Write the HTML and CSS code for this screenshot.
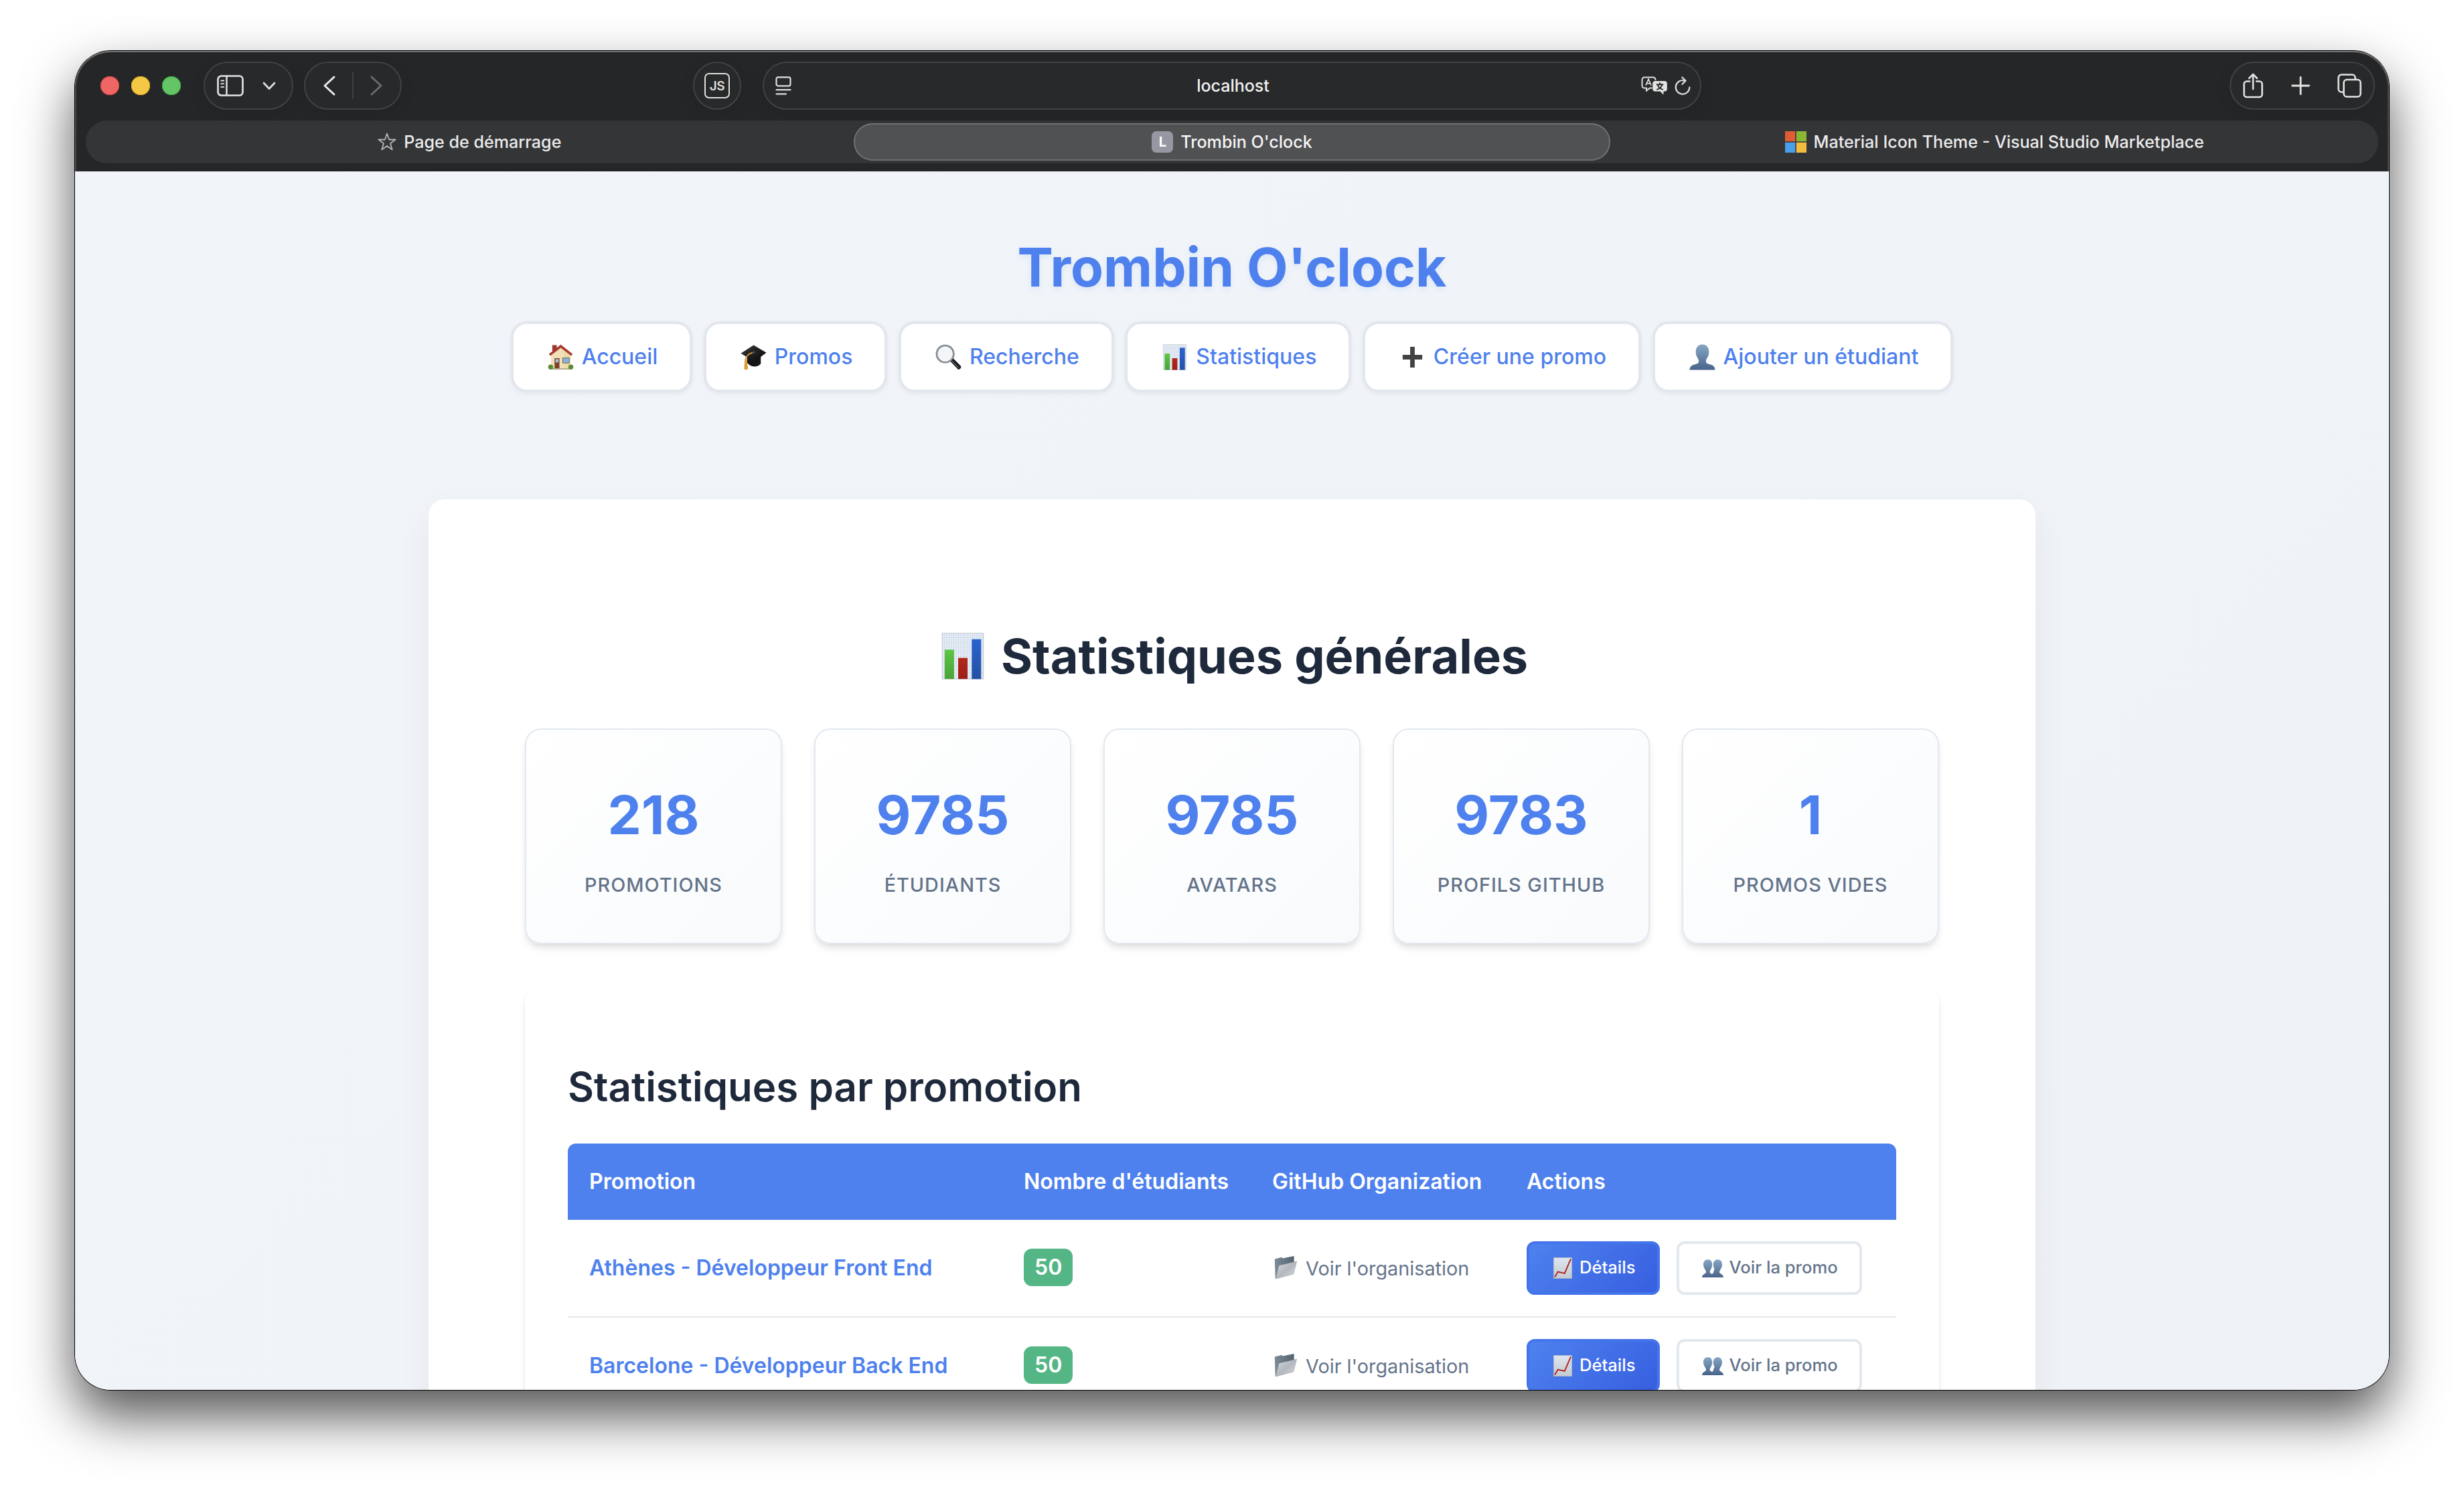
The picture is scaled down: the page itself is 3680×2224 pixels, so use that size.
FILE: index.html
```html
<!DOCTYPE html>
<html lang="fr">
<head>
<meta charset="utf-8">
<title>Trombin O'clock</title>
<link rel="stylesheet" href="styles.css">
</head>
<body>
<svg class="defs" width="0" height="0" aria-hidden="true">
  <defs>
    <linearGradient id="g-sil" x1="0" y1="0" x2="0" y2="1"><stop offset="0" stop-color="#87a7c4"/><stop offset="1" stop-color="#48648a"/></linearGradient>
    <linearGradient id="g-paper" x1="0" y1="0" x2="0" y2="1"><stop offset="0" stop-color="#dfe6ef"/><stop offset="1" stop-color="#c4cad2"/></linearGradient>
    <linearGradient id="g-fold" x1="0" y1="0" x2="1" y2="1"><stop offset="0" stop-color="#d9dce1"/><stop offset=".5" stop-color="#b3b7be"/><stop offset="1" stop-color="#dcdee2"/></linearGradient>
    <linearGradient id="g-back" x1="0" y1="0" x2="1" y2="0"><stop offset="0" stop-color="#7d8c97"/><stop offset="1" stop-color="#53636f"/></linearGradient>
    <linearGradient id="g-green" x1="0" y1="0" x2="0" y2="1"><stop offset="0" stop-color="#5cc643"/><stop offset="1" stop-color="#4aa338"/></linearGradient>
    <linearGradient id="g-red" x1="0" y1="0" x2="0" y2="1"><stop offset="0" stop-color="#b3271d"/><stop offset="1" stop-color="#9b1f17"/></linearGradient>
    <linearGradient id="g-blue" x1="0" y1="0" x2="0" y2="1"><stop offset="0" stop-color="#2a62cf"/><stop offset="1" stop-color="#2450a4"/></linearGradient>
    <linearGradient id="g-cap" x1="0" y1="0" x2="1" y2="1"><stop offset="0" stop-color="#3a3a3a"/><stop offset="1" stop-color="#050505"/></linearGradient>
    <pattern id="p-grid" width="2" height="2" patternUnits="userSpaceOnUse"><rect width="2" height="2" fill="#e9eff6"/><path d="M0 0H2M0 0V2" stroke="#b9cbe0" stroke-width=".5"/></pattern>
  </defs>
  <symbol id="e-house" viewBox="0 0 40 40">
    <path d="M7 1.5h7v9H7z" fill="#9c3a33"/>
    <path d="M5 15L20 3l15 12v23H5z" fill="#f2dfb4"/>
    <path d="M20 3l15 12v23H26V9z" fill="#e8d3a4" opacity=".6"/>
    <path d="M20 1.2L2.4 15.2l1.6 2.2L20 5.2l16 12.2 1.6-2.2z" fill="#b5392f" stroke="#7d2a25" stroke-width=".8"/>
    <path d="M9 20h10v18H9z" fill="#eadfc8"/><path d="M10.500 21.500h7.500v16.500h-7.500z" fill="#7e4426"/><path d="M12 23h4.500v5H12z" fill="#9fc4e6"/>
    <path d="M22.500 20.500h11v9h-11z" fill="#8a6a44"/><path d="M23.500 21.500h9v7h-9z" fill="#7fb2e6"/>
    <path d="M5 37h30v2H5z" fill="#b5a88c"/>
    <circle cx="4.500" cy="35" r="3.800" fill="#5b8c35"/><circle cx="35.500" cy="35" r="3.800" fill="#5b8c35"/>
  </symbol>
  <symbol id="e-cap" viewBox="0 0 40 40">
    <path d="M10 18v10c4 7 15 9 21 2V18z" fill="#161616"/>
    <path d="M20 1.500L39.500 13 21 27 .5 14z" fill="url(#g-cap)"/>
    <path d="M20 12.500C12 15 8 18 7.500 25" fill="none" stroke="#d99a3a" stroke-width="1.800"/>
    <path d="M6.500 23h3l2 15-3.500 1.500L5.500 38z" fill="#dc9a35"/>
    <ellipse cx="20.500" cy="12.500" rx="2.600" ry="1.700" fill="#444"/>
  </symbol>
  <symbol id="e-search" viewBox="0 0 40 40">
    <path d="M24 24l3-2.500 12 12c1.200 2.500-1.500 6-4.500 5L23.500 27z" fill="#17191c"/>
    <path d="M25 25.500l11 11" stroke="#777" stroke-width="1.200"/>
    <circle cx="15" cy="15" r="13" fill="#f4f5f6" stroke="#5d646c" stroke-width="2.600"/>
    <circle cx="15" cy="15" r="13.200" fill="none" stroke="#b8c0c8" stroke-width="1"/>
  </symbol>
  <symbol id="e-bars" viewBox="0 0 40 40">
    <path d="M2.500 .5h35v39h-35z" fill="url(#p-grid)" stroke="#c9ced6" stroke-width=".8"/>
    <path d="M4.500 14.500h8v25h-8z" fill="url(#g-green)"/><path d="M16 21.500h8v18h-8z" fill="url(#g-red)"/><path d="M27.600 5.500h8v34h-8z" fill="url(#g-blue)"/>
  </symbol>
  <symbol id="e-plus" viewBox="0 0 40 40"><path d="M16.500 4h7v12.500H35v7H23.500V36h-7V23.500H5v-7h11.500z" fill="#434343"/></symbol>
  <symbol id="e-person" viewBox="0 0 40 40"><path d="M20 .5c6.500 0 10 4.500 10 11 0 3.500-.5 6-2 8.500-1.300 2.400-2.500 3.500-2.500 6 0 3 1.500 4 5 4.700 5.500 1 8.500 3 9 8.800H.5c.5-5.800 3.500-7.800 9-8.800 3.500-.7 5-1.700 5-4.700 0-2.500-1.200-3.600-2.500-6-1.500-2.500-2-5-2-8.500C10 5 13.500.5 20 .5z" fill="url(#g-sil)"/></symbol>
  <symbol id="e-people" viewBox="0 0 40 40">
    <path d="M29 4c5.500 0 8.500 3.500 8.500 9.500 0 7-5 10-5 14s7 2.500 7.500 10H18z" fill="url(#g-sil)"/><path d="M29 4c-4.500 0-8 3.500-8 9.500 0 7 4.500 10 4.500 14l-7.500 4 0 6h14z" fill="url(#g-sil)"/>
    <path d="M11 4c5.500 0 8 3.500 8 9.500 0 7-4.500 10-4.500 14s8 2.500 10 10H0c.5-7.500 7.500-6 7.500-10s-5-7-5-14C2.500 7.500 5.500 4 11 4z" fill="url(#g-sil)"/>
  </symbol>
  <symbol id="e-trend" viewBox="0 0 40 40"><path d="M3 .5h34v39H3z" fill="url(#g-paper)" stroke="#a9b1bb" stroke-width="1"/><path d="M5 37L11 27l12.500 3L35 3" fill="none" stroke="#b1231c" stroke-width="2.400"/></symbol>
  <symbol id="e-folder" viewBox="0 0 40 40">
    <path d="M2 6l12-3 1 2 19-4v14L3 38z" fill="url(#g-back)"/>
    <path d="M9 17L38.500 10 33 31 3.500 39z" fill="url(#g-fold)" stroke="#8d949b" stroke-width=".6"/>
  </symbol>
</svg>

<div class="window">
  <header class="chrome">
    <div class="toolbar">
      <div class="lights"><i class="light red"></i><i class="light yellow"></i><i class="light green"></i></div>
      <div class="pill pill-side">
        <svg width="40" height="32" viewBox="0 0 40 32" fill="none" stroke="#e6e6e6"><rect x="1.500" y="1.500" width="37" height="29" rx="5" stroke-width="2.600"/><path d="M14.500 1.500v29" stroke-width="2.400"/><path d="M5.500 8.500h5.500M5.500 13.200h5.500M5.500 17.900h5.500" stroke-width="1.800"/></svg>
        <svg width="20" height="13" viewBox="0 0 20 13" fill="none" stroke="#dcdcdc" stroke-width="2.800" stroke-linecap="round" stroke-linejoin="round"><path d="M2 2l8 8.500L18 2"/></svg>
      </div>
      <div class="pill pill-nav">
        <svg width="18" height="30" viewBox="0 0 18 30" fill="none" stroke="#ececec" stroke-width="3" stroke-linecap="round" stroke-linejoin="round"><path d="M16 2L2 15l14 13"/></svg>
        <i class="sep"></i>
        <svg width="18" height="30" viewBox="0 0 18 30" fill="none" stroke="#6a6b6c" stroke-width="3" stroke-linecap="round" stroke-linejoin="round"><path d="M2 2l14 13L2 28"/></svg>
      </div>
      <div class="pill pill-js"><span class="js">JS</span></div>
      <div class="pill pill-url">
        <svg width="24" height="28" viewBox="0 0 24 28" fill="none" stroke="#dedede" stroke-width="2.200" stroke-linecap="round"><rect x="1.500" y="1.300" width="21" height="13" rx="2.500"/><path d="M1.500 20.200h21M1.500 26.300h14.500"/></svg>
        <span class="host">localhost</span>
        <span class="url-tools">
          <svg width="39" height="28" viewBox="0 0 39 28"><path d="M5 1.500h13a3.500 3.500 0 0 1 3.500 3.500v9a3.500 3.500 0 0 1-3.500 3.500H13l-5 4v-4H5A3.500 3.500 0 0 1 1.500 14V5A3.500 3.500 0 0 1 5 1.500z" fill="none" stroke="#dedede" stroke-width="2"/><rect x="16.500" y="6" width="23" height="18" rx="4" fill="#28292a"/><path d="M21 7h14a3.800 3.800 0 0 1 3.800 3.800v8a3.800 3.800 0 0 1-3.800 3.800h-1.500v5l-5-5H21a3.800 3.800 0 0 1-3.800-3.800v-8A3.800 3.800 0 0 1 21 7z" fill="#e2e2e2"/><path d="M7 13.500L11 4.200l4 9.300M8.400 10.600h5.200" fill="none" stroke="#dedede" stroke-width="1.800"/><path d="M28 9.200v2.600M22.800 12.300h10.400M24.800 12.800c1 3.500 4 6 8 7M31.200 12.800c-1 3.500-4 6-8 7" fill="none" stroke="#28292a" stroke-width="1.900"/></svg>
          <svg width="24" height="28" viewBox="0 0 24 28" fill="none" stroke="#dedede" stroke-width="2.200" stroke-linecap="round" stroke-linejoin="round"><path d="M15 6.500A10.300 10.300 0 1 0 22.300 16.400"/><path d="M11.300 1.500L16.500 6.600l-5.200 5.200"/></svg>
        </span>
      </div>
      <div class="pill pill-right">
        <svg width="30" height="38" viewBox="0 0 30 38" fill="none" stroke="#e2e2e2" stroke-width="2.600" stroke-linecap="round" stroke-linejoin="round"><path d="M10 12.500H5.500a4 4 0 0 0-4 4V32a4 4 0 0 0 4 4h19a4 4 0 0 0 4-4V16.500a4 4 0 0 0-4-4H20M15 24V2M9 8l6-6 6 6"/></svg>
        <svg width="28" height="28" viewBox="0 0 28 28" fill="none" stroke="#e6e6e6" stroke-width="2.800" stroke-linecap="round"><path d="M14 1.500v25M1.500 14h25"/></svg>
        <svg width="36" height="36" viewBox="0 0 36 36" fill="none" stroke="#e2e2e2" stroke-width="2.600" stroke-linejoin="round"><path d="M9 27.500H6A4.500 4.500 0 0 1 1.500 23V6A4.500 4.500 0 0 1 6 1.500h16A4.500 4.500 0 0 1 26.500 6v2.500"/><rect x="9.500" y="9" width="25" height="25.500" rx="4.500"/></svg>
      </div>
    </div>
    <nav class="tabs">
      <div class="tab"><svg width="28" height="28" viewBox="0 0 28 28" fill="none" stroke="#b5b5b6" stroke-width="1.800" stroke-linejoin="round"><path d="M14 1.500l3.100 9h9.500l-7.600 5.700 2.800 9.300L14 19.900l-7.800 5.600L9 16.200 1.400 10.500h9.500z"/></svg><span>Page de démarrage</span></div>
      <div class="tab active"><b class="fav">L</b><span>Trombin O'clock</span></div>
      <div class="tab"><svg width="32" height="32" viewBox="0 0 32 32"><path d="M0 0h15.200v15.200H0z" fill="#e05c35"/><path d="M16.800 0H32v15.200H16.800z" fill="#8ab535"/><path d="M0 16.800h15.200V32H0z" fill="#4a9fea"/><path d="M16.800 16.800H32V32H16.800z" fill="#f4bb41"/></svg><span>Material Icon Theme - Visual Studio Marketplace</span></div>
    </nav>
  </header>

  <main class="page">
    <h1 class="brand">Trombin O'clock</h1>
    <nav class="menu">
      <a class="menu-item"><svg class="emo"><use href="#e-house"/></svg><span>Accueil</span></a>
      <a class="menu-item"><svg class="emo"><use href="#e-cap"/></svg><span>Promos</span></a>
      <a class="menu-item"><svg class="emo"><use href="#e-search"/></svg><span>Recherche</span></a>
      <a class="menu-item"><svg class="emo"><use href="#e-bars"/></svg><span>Statistiques</span></a>
      <a class="menu-item"><svg class="emo"><use href="#e-plus"/></svg><span>Créer une promo</span></a>
      <a class="menu-item"><svg class="emo"><use href="#e-person"/></svg><span>Ajouter un étudiant</span></a>
    </nav>

    <section class="panel">
      <h2 class="panel-title"><svg class="emo-lg"><use href="#e-bars"/></svg><span>Statistiques générales</span></h2>
      <div class="stats">
        <div class="stat"><div class="num">218</div><div class="label">Promotions</div></div>
        <div class="stat"><div class="num">9785</div><div class="label">Étudiants</div></div>
        <div class="stat"><div class="num">9785</div><div class="label">Avatars</div></div>
        <div class="stat"><div class="num">9783</div><div class="label">Profils GitHub</div></div>
        <div class="stat"><div class="num">1</div><div class="label">Promos vides</div></div>
      </div>
      <div class="by-promo">
        <h3 class="sub-title">Statistiques par promotion</h3>
        <div class="table">
          <div class="row head"><span>Promotion</span><span>Nombre d'étudiants</span><span>GitHub Organization</span><span>Actions</span></div>
          <div class="row">
            <a class="promo">Athènes - Développeur Front End</a>
            <b class="badge">50</b>
            <a class="org"><svg class="emo-md"><use href="#e-folder"/></svg><span>Voir l'organisation</span></a>
            <div class="actions"><a class="btn primary"><svg class="emo-sm"><use href="#e-trend"/></svg><span>Détails</span></a><a class="btn"><svg class="emo-sm"><use href="#e-people"/></svg><span>Voir la promo</span></a></div>
          </div>
          <div class="row">
            <a class="promo">Barcelone - Développeur Back End</a>
            <b class="badge">50</b>
            <a class="org"><svg class="emo-md"><use href="#e-folder"/></svg><span>Voir l'organisation</span></a>
            <div class="actions"><a class="btn primary"><svg class="emo-sm"><use href="#e-trend"/></svg><span>Détails</span></a><a class="btn"><svg class="emo-sm"><use href="#e-people"/></svg><span>Voir la promo</span></a></div>
          </div>
        </div>
      </div>
    </section>
  </main>
</div>
</body>
</html>
```
FILE: styles.css
```css
* { box-sizing: border-box; }

body {
  margin: 0;
  height: 2224px;
  padding: 76px 112px 148px;
  background: #fff;
  font-family: Inter, "Liberation Sans", sans-serif;
  overflow: hidden;
}

.defs { position: absolute; }
h1, h2, h3 { margin: 0; }
svg { display: block; flex: none; overflow: visible; }

.window {
  display: flex;
  flex-direction: column;
  height: 2000px;
  border-radius: 54px;
  overflow: hidden;
  background: #f1f5f9;
  box-shadow: 0 0 0 1px #000, 0 39px 80px rgba(0, 0, 0, .68);
}

/* Browser chrome */
.chrome {
  flex: none;
  height: 180px;
  background: #252628;
  border-radius: 54px 54px 0 0;
  box-shadow: inset 0 2px 0 #747576, inset 2px 0 0 #4b4c4d, inset -2px 0 0 #4b4c4d;
}
.toolbar { display: flex; align-items: center; height: 104px; padding: 0 21px 0 38px; }
.lights { display: flex; gap: 18px; width: 154px; }
.light { width: 28px; height: 28px; border-radius: 50%; }
.red { background: #ee6765; box-shadow: inset 0 0 0 1px #df4744; }
.yellow { background: #f4c844; box-shadow: inset 0 0 0 1px #dfae23; }
.green { background: #65c466; box-shadow: inset 0 0 0 1px #3fae43; }
.pill {
  display: flex;
  align-items: center;
  height: 72px;
  border-radius: 36px;
  border: 2px solid #3d4444;
  background: #28292a;
  box-shadow: 0 8px 24px rgba(0, 0, 0, .08);
}
.pill-side { width: 134px; padding-left: 18px; gap: 28px; }
.pill-nav { width: 146px; margin-left: 16px; padding: 0 27px; justify-content: space-between; }
.sep { width: 2px; height: 40px; background: #3e3f40; }
.pill-js { width: 72px; margin-left: 435px; justify-content: center; }
.js {
  width: 38px;
  height: 38px;
  border: 2px solid #dedede;
  border-radius: 7px;
  color: #dedede;
  font-size: 19px;
  font-weight: 600;
  line-height: 35px;
  letter-spacing: -.5px;
  text-align: center;
}
.pill-url { width: 1402px; margin-left: 32px; padding: 0 14px 0 17px; justify-content: space-between; }
.host { margin-left: 50px; color: #f2f2f2; font-size: 25px; font-weight: 500; }
.url-tools { display: flex; gap: 11px; }
.pill-right { width: 217px; margin-left: auto; padding: 0 18px 0 18px; justify-content: space-between; }
.tabs {
  display: grid;
  grid-template-columns: repeat(3, 1fr);
  height: 64px;
  margin: 0 16px;
  padding: 4px;
  border-radius: 32px;
  background: #343537;
}
.tab {
  display: flex;
  align-items: center;
  justify-content: center;
  gap: 11px;
  border-radius: 28px;
  color: #ebebeb;
  font-size: 25.1px;
  font-weight: 500;
}
.active { background: #505153; box-shadow: inset 0 0 0 2px #6f7071; margin: 0 4px; color: #f5f5f5; }
.fav { width: 32px; height: 32px; border-radius: 7px; background: #9797a3; color: #fff; font-size: 20px; line-height: 33px; text-align: center; }

/* Page */
.page { flex: 1; padding: 95px 528px 0; background: linear-gradient(135deg, #f1f5f9, #f0f4f8 50%, #eef2f7); }
.brand {
  text-align: center;
  color: #4e81ee;
  font-size: 80px;
  line-height: 96px;
  font-weight: 700;
  text-shadow: 0 4px 8px rgba(78, 129, 238, .12);
}
.menu { display: flex; justify-content: center; gap: 16.5px; margin-top: 33px; }
.menu-item {
  display: flex;
  align-items: center;
  gap: 11px;
  height: 106px;
  padding: 0 48px;
  border: 4px solid #e2e7ee;
  border-radius: 24px;
  background: #fff;
  box-shadow: 0 2px 6px rgba(0, 0, 0, .06);
  color: #4e81ee;
  font-size: 32px;
  font-weight: 500;
}
.menu-item span, .head span, .promo { padding-bottom: 2px; }
.emo { width: 39px; height: 39px; margin: 0 1px 0 3px; }

.panel {
  height: 1600px;
  margin-top: 160px;
  padding: 191px 144px 0;
  border-radius: 24px;
  background: #fff;
  box-shadow: 0 20px 50px rgba(0, 0, 0, .06);
}
.panel-title { display: flex; justify-content: center; align-items: center; gap: 18px; color: #1e293b; font-size: 72px; line-height: 86px; font-weight: 700; }
.emo-lg { width: 70px; height: 72px; margin: 0 4px 0 5px; }
.stats { display: grid; grid-template-columns: repeat(5, 1fr); gap: 48px; margin-top: 65px; }
.stat {
  height: 322px;
  padding-top: 87px;
  border: 2px solid #e2e8f0;
  border-radius: 24px;
  background: linear-gradient(135deg, #fff, #f8fafc);
  box-shadow: 0 8px 12px -2px rgba(0, 0, 0, .1), 0 4px 8px -2px rgba(0, 0, 0, .05);
  text-align: center;
}
.num { color: #4e81ee; font-size: 80px; line-height: 80px; font-weight: 700; }
.label { margin-top: 45px; color: #64748b; font-size: 28.8px; line-height: 40px; font-weight: 500; letter-spacing: 1px; text-transform: uppercase; }
.by-promo { height: 900px; margin-top: 64px; padding: 113px 64px 0; border-radius: 24px; box-shadow: 0 6px 8px rgba(0, 0, 0, .1); background: #fff; }
.sub-title { color: #1e293b; font-size: 60px; line-height: 72px; font-weight: 600; }
.table { margin-top: 49px; }
.row {
  display: grid;
  grid-template-columns: 649px 371px 380px 1fr;
  align-items: center;
  justify-items: start;
  height: 146px;
  padding-left: 32px;
  border-bottom: 2px solid #e2e8ec;
}
.head { height: 114px; border: 0; border-radius: 12px 12px 0 0; background: #4e81ee; color: #fff; font-size: 32px; font-weight: 600; }
.promo { color: #4e81ee; font-size: 32px; font-weight: 600; }
.badge { height: 56px; margin-bottom: 2px; padding: 0 16px; border-radius: 12px; background: #55b685; color: #fff; font-size: 32px; line-height: 56px; font-weight: 600; }
.org { display: flex; align-items: center; gap: 10px; color: #64748b; font-size: 28.8px; }
.emo-md { width: 36px; height: 36px; margin: 0 2px 3px; }
.actions { display: flex; gap: 25px; }
.btn {
  display: flex;
  align-items: center;
  gap: 7px;
  height: 80px;
  padding: 0 32px;
  border: 4px solid #e2e8ee;
  border-radius: 12px;
  color: #64748b;
  font-size: 25.6px;
  font-weight: 500;
}
.btn span { padding-bottom: 3px; }
.primary { border-color: #4474ea; background: linear-gradient(135deg, #4e81ee, #375fe0); color: #fff; }
.emo-sm { width: 32px; height: 32px; margin: 0 2px; }
```
